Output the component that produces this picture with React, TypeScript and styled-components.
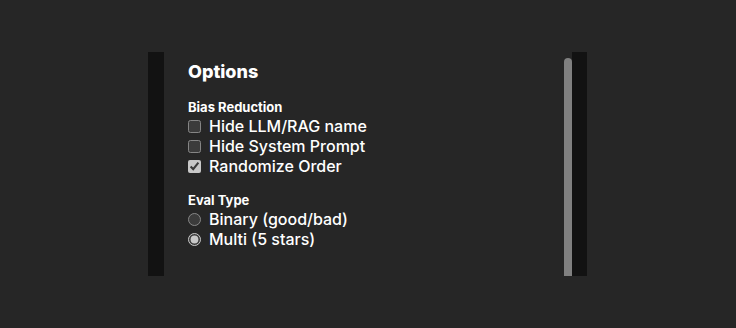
import styled, { createGlobalStyle } from 'styled-components';

const GlobalStyle = createGlobalStyle`
  html, body {
    margin: 0;
    padding: 0;
    background: #262626;
    color-scheme: dark;
  }

  body {
    font-family: Inter, 'Noto Sans', sans-serif;
  }
`;

const biasOptions = [
  { id: 'hide-name', label: 'Hide LLM/RAG name', checked: false },
  { id: 'hide-prompt', label: 'Hide System Prompt', checked: false },
  { id: 'randomize', label: 'Randomize Order', checked: true },
];

const evalTypes = [
  { id: 'binary', label: 'Binary (good/bad)', checked: false },
  { id: 'multi', label: 'Multi (5 stars)', checked: true },
];

const App = () => {
  return (
    <>
      <GlobalStyle />
      <Page>
        <Panel>
          <Content>
            <Title>Options</Title>

            <Section>
              <SectionTitle>Bias Reduction</SectionTitle>
              {biasOptions.map((opt) => (
                <OptionRow key={opt.id}>
                  <Checkbox type="checkbox" defaultChecked={opt.checked} />
                  <span>{opt.label}</span>
                </OptionRow>
              ))}
            </Section>

            <Section>
              <SectionTitle>Eval Type</SectionTitle>
              {evalTypes.map((opt) => (
                <OptionRow key={opt.id}>
                  <Radio type="radio" name="eval-type" defaultChecked={opt.checked} />
                  <span>{opt.label}</span>
                </OptionRow>
              ))}
            </Section>

            <ScrollThumb />
          </Content>
        </Panel>
      </Page>
    </>
  );
};

const Page = styled.div`
  height: 328px;
  padding-left: 148px;
  display: flex;
  align-items: center;
`;

const Panel = styled.div`
  width: 439px;
  height: 224px;
  box-sizing: border-box;
  display: flex;
  border-left: 16px solid #121212;
  border-right: 15px solid #121212;
`;

const Content = styled.div`
  position: relative;
  flex: 1;
  padding: 9px 24px 0;
  color: #ffffff;
`;

const Title = styled.h2`
  margin: 0;
  font-size: 18px;
  line-height: 22px;
  font-weight: 800;
`;

const Section = styled.div`
  margin-top: 16px;
  display: flex;
  flex-direction: column;
`;

const SectionTitle = styled.div`
  font-size: 13px;
  line-height: 17px;
  font-weight: 700;
`;

const OptionRow = styled.label`
  display: flex;
  align-items: center;
  gap: 8px;
  height: 20px;
  font-size: 16px;
  font-weight: 500;
  color: #ffffff;
`;

const Checkbox = styled.input`
  margin: 0;
  width: 13px;
  height: 13px;
  accent-color: #c8c8c8;
`;

const Radio = styled.input`
  margin: 0;
  width: 13px;
  height: 13px;
  accent-color: #c8c8c8;
`;

const ScrollThumb = styled.div`
  position: absolute;
  right: 0;
  top: 6px;
  bottom: 0;
  width: 8px;
  background: #808080;
  border-radius: 4px 4px 0 0;
`;

export default App;
